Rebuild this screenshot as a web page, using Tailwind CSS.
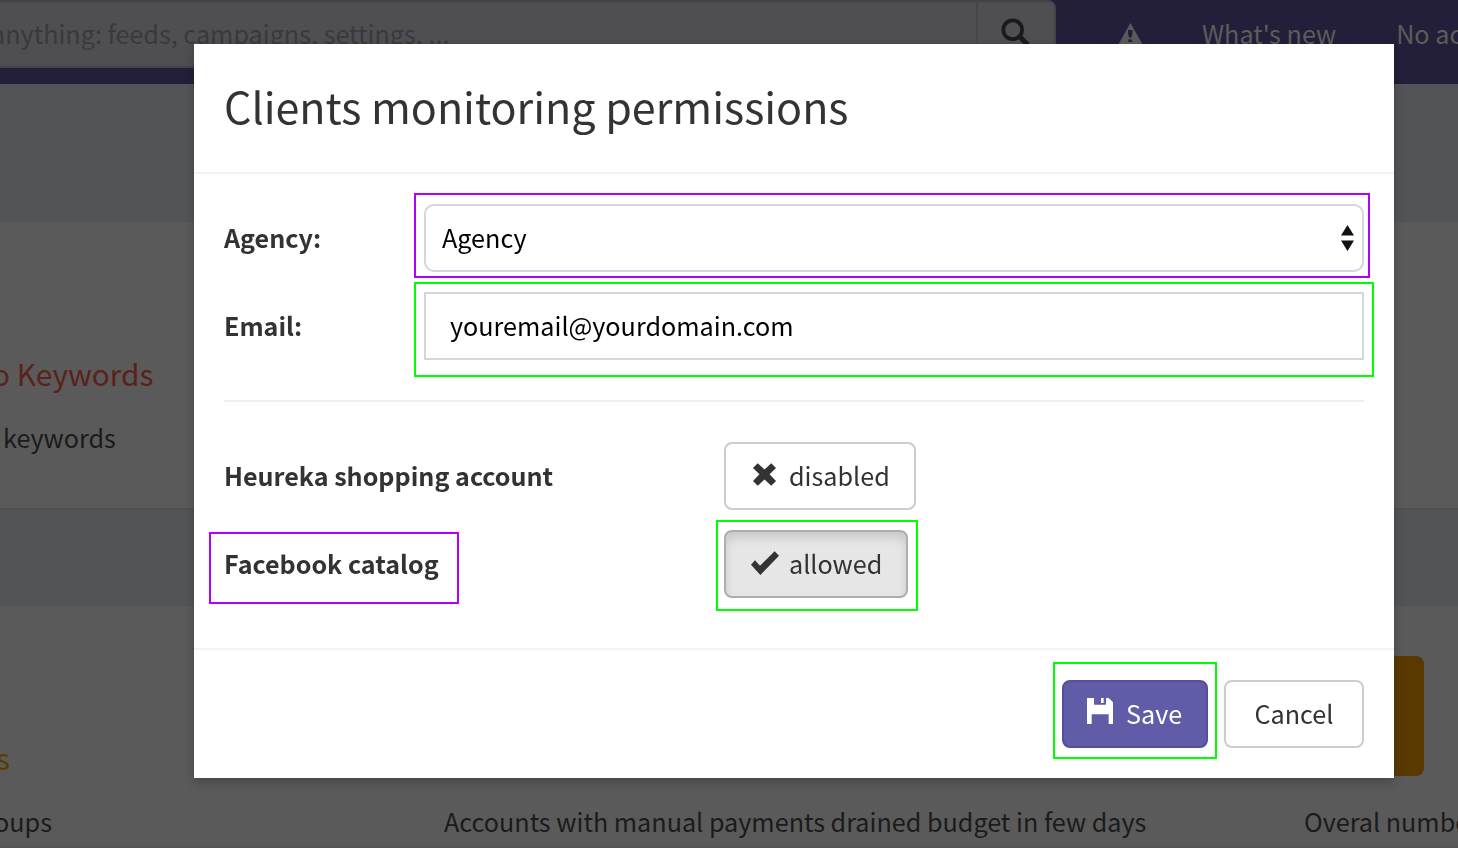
<!DOCTYPE html>
<html lang="en">
<head>
<meta charset="utf-8">
<title>Clients monitoring permissions</title>
<script src="https://cdn.jsdelivr.net/npm/@tailwindcss/browser@4"></script>
</head>
<body class="h-[848px] w-[1458px] overflow-hidden bg-[#5a5a5a] font-['Noto_Sans_CJK_JP','Source_Sans_Pro',sans-serif] text-[25.18px] leading-[40px] whitespace-nowrap text-[#1b1b1b]">

<div class="flex h-[848px] flex-col overflow-hidden">
  <header class="flex h-[84px] shrink-0 items-start bg-[#231f3b]">
    <div class="flex h-[68px] w-[1056px] shrink-0 rounded-r-lg border-2 border-l-0 border-[#444348] bg-[#4f4e53]">
      <div class="flex-1 pt-[11px] text-[#3a393c]"><span class="-ml-[9px]">anything: feeds, campaigns, settings, ...</span></div>
      <div class="w-[78px] border-l-2 border-[#47464a] pt-[14px] pl-[22px]">
        <svg class="size-8" viewBox="0 0 32 32" fill="none" stroke="#1a1a1a"><circle cx="12.7" cy="13.7" r="9.4" stroke-width="3.8"/><path d="M19.5 20.5L28 29" stroke-width="5"/></svg>
      </div>
    </div>
    <svg class="mt-[22px] ml-[61px] h-[26px] w-[28px] shrink-0" viewBox="0 0 28 26" fill="#5a5a5a"><path fill-rule="evenodd" d="M13.4 1L27 25H0ZM11 8V12L12 15.4H14.4L15.4 12V8ZM11.4 17.4V20H15V17.4Z"/></svg>
    <nav class="ml-[57px] flex gap-[60px] pt-[13px] text-[#5c5c59]"><span>What's new</span><span>No accounts</span></nav>
  </header>

  <div class="h-[138px] shrink-0 bg-[#525456]"></div>
  <section class="h-[286px] shrink-0 bg-[#5a5a5a] pt-[129px]">
    <h3 class="-ml-[8px] text-[29.8px] leading-[44px] text-[#5b221a]">o Keywords</h3>
    <p class="mt-[22px] ml-[3px]">keywords</p>
  </section>
  <div class="h-[98px] shrink-0 border-t-2 border-[#4f4f4f] bg-[#525456]"></div>
  <section class="flex h-[242px] shrink-0 flex-col border-b-2 border-[#535354] bg-[#5a5a5a] pt-[50px]">
    <div class="flex h-[120px] items-end">
      <h3 class="-ml-[4px] w-[1004px] shrink-0 pb-[2px] text-[29.8px] leading-[34px] text-[#5b3b00]">s</h3>
      <div class="h-[120px] w-[424px] shrink-0 rounded-lg bg-[#5a3900]"></div>
    </div>
    <div class="mt-[25px] flex">
      <p class="w-[444px] shrink-0"><span class="-ml-[6px]">oups</span></p>
      <p class="w-[860px] shrink-0">Accounts with manual payments drained budget in few days</p>
      <p class="shrink-0">Overal number</p>
    </div>
  </section>
</div>

<div role="dialog" class="fixed top-[44px] left-[194px] flex h-[734px] w-[1200px] flex-col bg-white text-[#333] shadow-[0_4px_10px_rgba(0,0,0,0.22)]">
  <header class="h-[130px] shrink-0 border-b-2 border-[#f3f3f3] px-[30px] pt-[27px]">
    <h1 class="text-[43px] leading-[68px]">Clients monitoring permissions</h1>
  </header>

  <main class="flex h-[474px] shrink-0 flex-col px-[30px] pt-[30px]">
    <div class="flex h-[68px] items-center">
      <div class="w-[200px] pb-[2px] text-[25.1px] font-bold">Agency:</div>
      <div class="relative flex h-[68px] w-[940px] items-center justify-between rounded-[10px] border-2 border-[#d2d6de] pr-[7px] pl-4 text-black">
        <span class="pb-[2px]">Agency</span>
        <svg class="h-[26px] w-[14px]" viewBox="0 0 14 26" fill="#111"><path d="M6.5 0L13 10.6H0ZM6.5 26L13 15.4H0Z"/></svg>
        <div class="absolute -top-[13px] -left-[12px] h-[85px] w-[956px] border-2 border-[#b000ff]"></div>
      </div>
    </div>
    <div class="mt-5 flex h-[68px] items-center">
      <div class="w-[200px] pb-[2px] text-[25.1px] font-bold">Email:</div>
      <div class="relative flex h-[68px] w-[940px] items-center border-2 border-[#d2d6de] pl-6 text-black">
        <span class="pb-[2px]">youremail@yourdomain.com</span>
        <div class="absolute -top-[12px] -left-[12px] h-[95px] w-[960px] border-2 border-[#00ff00]"></div>
      </div>
    </div>
    <div class="mt-10 h-[2px] shrink-0 bg-[#eee]"></div>
    <div class="mt-10 flex h-[68px] items-center">
      <div class="w-[500px] pb-[2px] text-[25.1px] font-bold">Heureka shopping account</div>
      <div class="flex h-[68px] w-[192px] items-center rounded-lg border-2 border-[#ccc] pl-[26.5px]">
        <svg class="-mt-[4px] mr-[13.5px] h-[23px] w-[23px]" viewBox="158 128 68 67" fill="#333"><path d="M172 128L192 147L212 128L226 142L207 161L226 181L212 195L192 176L172 195L158 181L177 161L158 142Z"/></svg>
        <span class="pb-[2px]">disabled</span>
      </div>
    </div>
    <div class="mt-5 flex h-[68px] items-center">
      <div class="relative w-[500px] pb-[2px] text-[25.1px] font-bold">Facebook catalog
        <div class="absolute -top-[11px] -left-[15px] h-[72px] w-[250px] border-2 border-[#b000ff]"></div>
      </div>
      <div class="relative flex h-[68px] w-[184px] items-center rounded-lg border-2 border-[#adadad] bg-[#e6e6e6] pl-[25px] shadow-[inset_0_6px_10px_rgba(0,0,0,0.125)]">
        <svg class="-mt-[3px] mr-[10px] h-[24px] w-[28px]" viewBox="153 393 84 72" fill="#333"><path d="M153 434L165 421L180 437L224 394L237 407L181 465Z"/></svg>
        <span class="pb-[2px]">allowed</span>
        <div class="absolute -top-[12px] -left-[10px] h-[91px] w-[202px] border-2 border-[#00ff00]"></div>
      </div>
    </div>
  </main>

  <footer class="flex flex-1 justify-end gap-4 border-t-2 border-[#f3f3f3] px-[30px] pt-[30px]">
    <div class="relative flex h-[68px] w-[146px] items-center rounded-lg border-2 border-[#554d9e] bg-[#605ca8] pl-[23px] text-white">
      <svg class="-mt-[6px] mr-[13px] h-[26px] w-[26px]" viewBox="141 174 78 78" fill="#fff"><path d="M141 174H162V194H198V174H206L219 187V252H206V223H155V252H141ZM183 174H191V189H183Z"/></svg>
      <span class="pb-[2px]">Save</span>
      <div class="absolute -top-[20px] -left-[11px] h-[97px] w-[164px] border-2 border-[#00ff00]"></div>
    </div>
    <div class="flex h-[68px] w-[140px] items-center justify-center rounded-lg border-2 border-[#ccc] pb-[2px]">Cancel</div>
  </footer>
</div>
</body>
</html>
